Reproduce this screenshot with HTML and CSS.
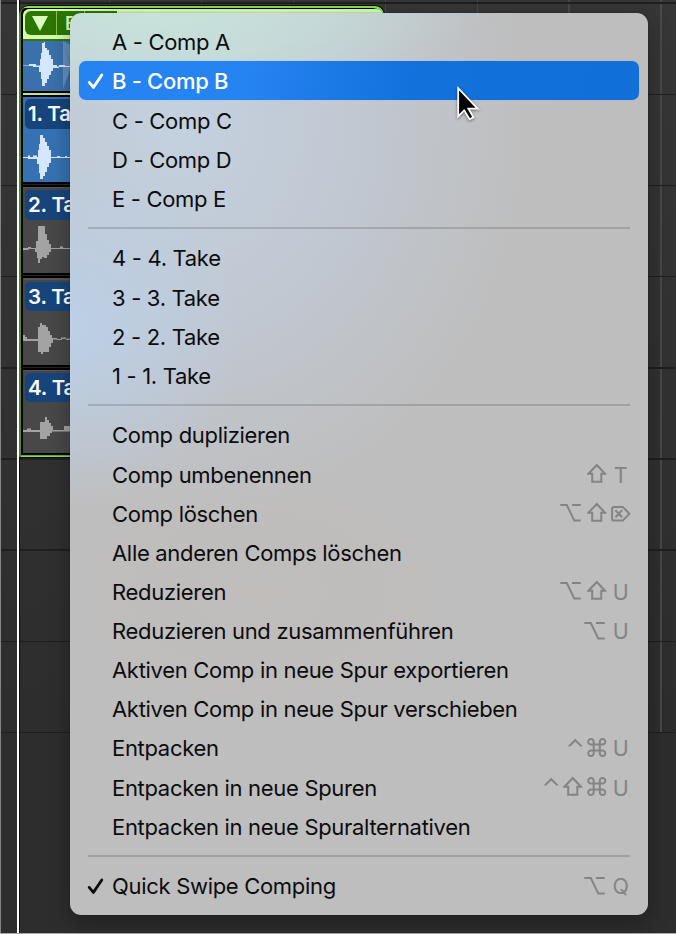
FILE: index.html
```
<!DOCTYPE html>
<html lang="de">
<head>
<meta charset="utf-8">
<title>Take-Ordner</title>
<link rel="stylesheet" href="styles.css">
</head>
<body>
<svg class="defs" width="0" height="0">
  <symbol id="shift" viewBox="0 0 19.5 22"><path d="M9.75 2 L18 10.7 H14.3 V18.7 H5.2 V10.7 H1.5 Z"/></symbol>
  <symbol id="opt" viewBox="0 0 21 22"><path d="M.3 3 H6.8 L14.3 18.6 H20.7 M12 3 H20.7"/></symbol>
  <symbol id="ctrl" viewBox="0 0 14.5 22"><path d="M.9 9.4 L7.25 3.2 L13.6 9.4"/></symbol>
  <symbol id="cmd" viewBox="0 0 19.5 22"><path d="M6.7 7.4 H12.8 V13.6 H6.7 Z M6.7 7.4 H4.3 A2.75 2.75 0 1 1 6.7 4.7 Z M12.8 7.4 V4.7 A2.75 2.75 0 1 1 15.2 7.4 Z M12.8 13.6 H15.2 A2.75 2.75 0 1 1 12.8 16.3 Z M6.7 13.6 V16.3 A2.75 2.75 0 1 1 4.3 13.6 Z"/></symbol>
  <symbol id="del" viewBox="0 0 19.5 22"><path d="M3 4.9 H11.8 L18.4 11.8 L11.8 18.6 H3 Q1.1 18.6 1.1 16.8 V6.7 Q1.1 4.9 3 4.9 Z M4.4 8.3 L11.2 15.2 M11.2 8.3 L4.4 15.2"/></symbol>
  <symbol id="check" viewBox="0 0 17 18"><path d="M2.2 10.4 L6.4 15.4 L14.8 3"/></symbol>
</svg>
<main class="arrange">
  <section class="folder">
    <header class="folder-head"><span class="pill"><svg class="tri" viewBox="0 0 16 15"><path d="M0 0H16L8 15Z"/></svg><span class="comp">B</span><span class="tail"></span></span></header>
    <div class="lane comp-lane">
      <svg class="wave" viewBox="0 0 48 50"><path class="fade" d="M40 0V48L48 26ZM40 0L48 24V4Z"/><path d="M0 24.5H6V23H13V24.5H17V18H18V12H19V2H21V1H22V7H24V9H26V14H28V18H30V24H34V25.5H36V24H42V25H48V26H36V27H30V30H28V34H26V38H24V42H22V45H19V38H18V31H16V26H10V25H0Z"/></svg>
    </div>
    <div class="split"></div>
    <div class="lane take1"><span class="label">1. Take</span>
      <svg class="wave" viewBox="0 0 48 54"><path d="M0 28H5V26.5H7V28H10V26.5H14V28H15V21H16V15H17V6H20V9H22V13H24V17H26V21H28V28H34V27H37V28H42V27H44V28H48V29H28V34H26V38H24V43H22V47H20V50H17V44H16V35H14V30H5V29H0Z"/></svg>
    </div>
    <div class="gap"></div>
    <div class="lane take"><span class="label">2. Take</span>
      <svg class="wave" viewBox="0 0 48 54"><path d="M0 28H5V27H8V28H13V21H15V6H22V14H24V20H26V24H28V28H37V26.5H40V28H48V29H28V32H26V35H24V38H21V37H19V39H17V43H15V38H14V32H12V29H7V28.5L5 30H0Z"/></svg>
    </div>
    <div class="gap"></div>
    <div class="lane take"><span class="label">3. Take</span>
      <svg class="wave" viewBox="0 0 48 54"><path d="M0 24H2V26H4V28H15V16H17V12H19V14H23V16H25V20H27V24H29V27H34V28H38V26.5H43V28H44V27.5H48V29H43V28H39V29H34V28.5H30V32H28V36H26V41H20V43H18V41H15V30H0Z"/></svg>
    </div>
    <div class="gap"></div>
    <div class="lane take last"><span class="label">4. Take</span>
      <svg class="wave" viewBox="0 0 48 54"><path d="M0 28H4V26.5H8V28H17V20H22V15H24V18H26V21H28V24H30V28H41V24H48V29.5H29V31H27V34H24V37H17V30H0Z"/></svg>
    </div>
  </section>
</main>

<nav class="menu">
  <div class="item"><span class="mark"></span><span class="name">A - Comp A</span></div>
  <div class="item active"><span class="mark"><svg><use href="#check"/></svg></span><span class="name">B - Comp B</span></div>
  <div class="item"><span class="mark"></span><span class="name">C - Comp C</span></div>
  <div class="item"><span class="mark"></span><span class="name">D - Comp D</span></div>
  <div class="item"><span class="mark"></span><span class="name">E - Comp E</span></div>
  <hr>
  <div class="item"><span class="mark"></span><span class="name">4 - 4. Take</span></div>
  <div class="item"><span class="mark"></span><span class="name">3 - 3. Take</span></div>
  <div class="item"><span class="mark"></span><span class="name">2 - 2. Take</span></div>
  <div class="item"><span class="mark"></span><span class="name">1 - 1. Take</span></div>
  <hr>
  <div class="item"><span class="mark"></span><span class="name">Comp duplizieren</span></div>
  <div class="item"><span class="mark"></span><span class="name">Comp umbenennen</span><span class="keys"><svg><use href="#shift"/></svg><b>T</b></span></div>
  <div class="item"><span class="mark"></span><span class="name">Comp löschen</span><span class="keys"><svg class="opt"><use href="#opt"/></svg><svg><use href="#shift"/></svg><svg><use href="#del"/></svg></span></div>
  <div class="item"><span class="mark"></span><span class="name">Alle anderen Comps löschen</span></div>
  <div class="item"><span class="mark"></span><span class="name">Reduzieren</span><span class="keys"><svg class="opt"><use href="#opt"/></svg><svg><use href="#shift"/></svg><b>U</b></span></div>
  <div class="item"><span class="mark"></span><span class="name">Reduzieren und zusammenführen</span><span class="keys"><svg class="opt"><use href="#opt"/></svg><b>U</b></span></div>
  <div class="item"><span class="mark"></span><span class="name">Aktiven Comp in neue Spur exportieren</span></div>
  <div class="item"><span class="mark"></span><span class="name">Aktiven Comp in neue Spur verschieben</span></div>
  <div class="item"><span class="mark"></span><span class="name">Entpacken</span><span class="keys"><svg class="ctrl"><use href="#ctrl"/></svg><svg><use href="#cmd"/></svg><b>U</b></span></div>
  <div class="item"><span class="mark"></span><span class="name">Entpacken in neue Spuren</span><span class="keys"><svg class="ctrl"><use href="#ctrl"/></svg><svg><use href="#shift"/></svg><svg><use href="#cmd"/></svg><b>U</b></span></div>
  <div class="item"><span class="mark"></span><span class="name">Entpacken in neue Spuralternativen</span></div>
  <hr>
  <div class="item"><span class="mark"><svg><use href="#check"/></svg></span><span class="name">Quick Swipe Comping</span><span class="keys"><svg class="opt"><use href="#opt"/></svg><b>Q</b></span></div>
</nav>
<svg class="cursor" viewBox="-2 -2 28 38"><path d="M1.2 2.2 V30.4 L7.2 24.4 L12.6 33.2 L16.4 31.2 L11.4 22.6 H20.6 Z"/></svg>
</body>
</html>
```
FILE: styles.css
```
* { box-sizing: border-box; }
body {
  margin: 0;
  width: 676px;
  height: 934px;
  overflow: hidden;
  position: relative;
  font-family: Inter, "Liberation Sans", sans-serif;
  background: #2c2c2c;
}
.defs { position: absolute; }

/* Track area with bar lines, row lines and playhead */
.arrange {
  height: 934px;
  padding: 5px 0 0 19px;
  border-bottom: 1px solid #a8a8a8;
  background:
    linear-gradient(90deg, #858585 1px, transparent 1px),
    linear-gradient(90deg, transparent 17px, #fff 17px, #fff 19px, #111 19px, #111 20.5px, transparent 20.5px),
    repeating-linear-gradient(180deg, transparent 0 2.5px, #1f1f1f 2.5px 4px, transparent 4px 91.15px) 0 0 / 100% 733px no-repeat,
    repeating-linear-gradient(90deg, transparent 0 17px, #484848 17px 18.5px, transparent 18.5px 91.9px) 0 0 / 100% 733px no-repeat,
    linear-gradient(180deg, #363636, #2d2d2d 733px);
}
.folder {
  width: 366px;
  height: 452.5px;
  padding: 4px 2px 0 3.5px;
  border-radius: 9px 10px 0 0;
  background: #000;
  box-shadow: inset 0 1px #000, inset 0 -1px #000, inset 2px 0 #4f862c, inset -1px 0 #000, inset -2.5px 3px #84e04c, inset 0 -2.7px #84e04c;
  overflow: hidden;
}
.folder-head {
  height: 32px;
  padding: 2px 0 0 2.5px;
  border-radius: 6px 7px 0 0;
  background: linear-gradient(#d4fbb0 30px, #347408 30px);
}
.pill {
  display: flex;
  align-items: center;
  width: 92px;
  height: 24px;
  border-radius: 6px 0 0 6px;
  background: #2d7602;
  color: #d4fbb0;
}
.tri { width: 16px; height: 15px; margin: 0 8px 0 7px; fill: #d9fdc0; }
.comp {
  height: 24px;
  width: 29px;
  padding-left: 8px;
  border-left: 1px solid #8bbd66;
  border-right: 1px solid #8bbd66;
  font: 600 18.5px/24px Inter, sans-serif;
}
.lane { width: 100%; overflow: hidden; }
.comp-lane { height: 50px; background: #3a71ad; }
.split { height: 6px; background: linear-gradient(#000 2px, #b9e89a 2px 4px, #000 4px); }
.take1 { height: 85px; padding-top: 2px; background: #3672b3; }
.take { height: 85px; padding-top: 2px; background: #484848; }
.last { height: 82px; }
.gap { height: 6.3px; background: linear-gradient(#000 2px, #242424 2px 3px, #000 3px 5px, #555 5px); }
.label {
  display: block;
  width: 120px;
  height: 29.5px;
  margin-left: 2.5px;
  padding-left: 3px;
  border-radius: 5px;
  background: #17457b;
  color: #fff;
  font-size: 20.5px;
  font-weight: 600;
  letter-spacing: -.2px;
  line-height: 30px;
}
.wave { display: block; width: 48px; height: 54px; fill: #a3a3a3; }
.comp-lane .wave { height: 50px; fill: #d3e8ff; }
.take1 .wave { fill: #d3e8ff; }
.wave .fade { fill: #fff; opacity: .22; }

/* Context menu */
.menu {
  position: absolute;
  left: 69.5px;
  top: 13px;
  width: 578px;
  height: 901.5px;
  padding: 9.2px 9px 9px 9.5px;
  border-radius: 11px;
  background:
    radial-gradient(ellipse 330px 95px at 80px 0, rgba(200, 228, 219, .95), rgba(200, 228, 219, .6) 50%, transparent),
    radial-gradient(ellipse 170px 180px at 0 315px, rgba(187, 208, 232, .95), transparent),
    radial-gradient(ellipse 350px 400px at 110px 110px, rgba(196, 211, 226, .9), rgba(194, 204, 218, .7) 50%, transparent),
    radial-gradient(ellipse 260px 160px at 190px 580px, rgba(194, 188, 184, .5), transparent),
    #bebebe;
  box-shadow: 0 0 1px rgba(0, 0, 0, .7), 0 8px 22px rgba(0, 0, 0, .3);
}
.item {
  display: flex;
  align-items: center;
  height: 39.13px;
  padding: 0 8px 0 8px;
  border-radius: 7px;
  color: #0c0c0c;
  font-size: 22px;
  line-height: 39px;
  white-space: nowrap;
}
.active {
  background: linear-gradient(100deg, #2683f2 30%, #1271db 60%, #116fd8);
  box-shadow: 0 0 1px #79aee8;
  color: #fff;
  font-weight: 500;
}
.mark { width: 25px; height: 18px; }
.mark svg {
  display: block;
  width: 17px;
  height: 18px;
  fill: none;
  stroke: currentColor;
  stroke-width: 2.8;
  stroke-linecap: round;
  stroke-linejoin: round;
}
.name { position: relative; top: 1px; letter-spacing: -.31px; }
.keys {
  display: flex;
  align-items: center;
  gap: 4.5px;
  margin-left: auto;
  color: #848484;
}
.keys svg {
  width: 19.5px;
  height: 22px;
  fill: none;
  stroke: currentColor;
  stroke-width: 2;
}
.keys .opt { width: 21px; margin-right: 1.5px; }
.keys .ctrl { width: 14.5px; }
.keys b { width: 19.5px; padding-top: 2px; text-align: center; font-size: 21.5px; font-weight: 400; }
hr {
  height: 2px;
  margin: 9.5px 9px 9px;
  border: 0;
  background: rgba(0, 0, 0, .15);
}
.cursor {
  position: absolute;
  left: 455px;
  top: 84px;
  width: 28px;
  height: 38px;
  fill: #000;
  stroke: #fff;
  stroke-width: 1.8;
  filter: drop-shadow(0 1.5px 1.5px rgba(0, 0, 0, .45));
}
```
